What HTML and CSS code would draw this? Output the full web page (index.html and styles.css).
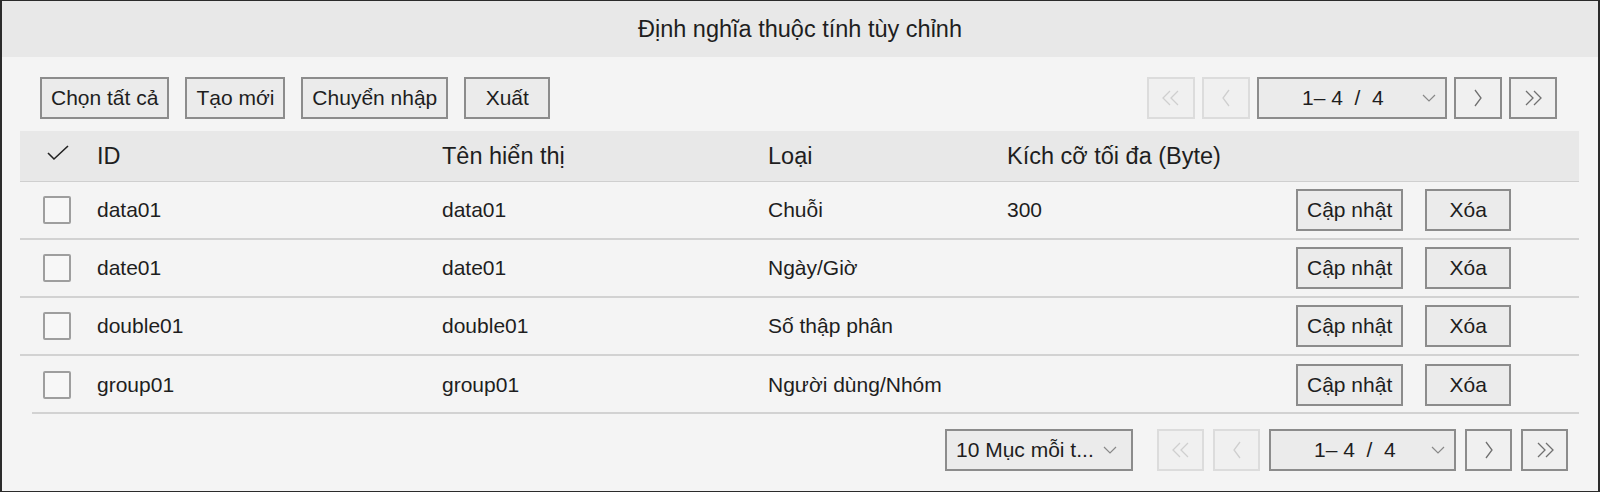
FILE: index.html
```html
<!DOCTYPE html>
<html>
<head>
    <meta charset="utf-8">
    <title>Định nghĩa thuộc tính tùy chỉnh</title>
    <link rel="stylesheet" href="styles.css">
</head>
<body>

<div class="dialog">
    <div class="dialog-title">Định nghĩa thuộc tính tùy chỉnh</div>

    <div class="dialog-body">
        <div class="toolbar">
            <div class="actions">
                <button class="btn">Chọn tất cả</button>
                <button class="btn">Tạo mới</button>
                <button class="btn">Chuyển nhập</button>
                <button class="btn">Xuất</button>
            </div>
            <div class="pager">
                <span class="pg disabled"><svg width="20" height="16" viewBox="0 0 20 16"><polyline points="9,1 2,8 9,15"/><polyline points="17,1 10,8 17,15"/></svg></span>
                <span class="pg disabled"><svg width="10" height="18" viewBox="0 0 10 18"><polyline points="8,1 2,9 8,17"/></svg></span>
                <span class="select page-select">1– 4&nbsp; /&nbsp; 4<svg class="chev" width="14" height="8" viewBox="0 0 14 8"><polyline points="1,1 7,7 13,1"/></svg></span>
                <span class="pg"><svg width="10" height="18" viewBox="0 0 10 18"><polyline points="2,1 8,9 2,17"/></svg></span>
                <span class="pg"><svg width="20" height="16" viewBox="0 0 20 16"><polyline points="3,1 10,8 3,15"/><polyline points="11,1 18,8 11,15"/></svg></span>
            </div>
        </div>

        <table class="grid">
            <colgroup>
                <col style="width: 77px">
                <col style="width: 345px">
                <col style="width: 326px">
                <col style="width: 239px">
                <col style="width: 289px">
                <col>
            </colgroup>
            <thead>
            <tr>
                <th><svg class="checkall" width="22" height="16" viewBox="0 0 22 16"><polyline points="1,8 7,14 21,1"/></svg></th>
                <th>ID</th>
                <th>Tên hiển thị</th>
                <th>Loại</th>
                <th>Kích cỡ tối đa (Byte)</th>
                <th></th>
            </tr>
            </thead>
            <tbody>
            <tr>
                <td><span class="check"></span></td>
                <td>data01</td>
                <td>data01</td>
                <td>Chuỗi</td>
                <td>300</td>
                <td><button class="btn">Cập nhật</button><button class="btn">Xóa</button></td>
            </tr>
            <tr>
                <td><span class="check"></span></td>
                <td>date01</td>
                <td>date01</td>
                <td>Ngày/Giờ</td>
                <td></td>
                <td><button class="btn">Cập nhật</button><button class="btn">Xóa</button></td>
            </tr>
            <tr>
                <td><span class="check"></span></td>
                <td>double01</td>
                <td>double01</td>
                <td>Số thập phân</td>
                <td></td>
                <td><button class="btn">Cập nhật</button><button class="btn">Xóa</button></td>
            </tr>
            <tr class="last">
                <td><span class="check"></span></td>
                <td>group01</td>
                <td>group01</td>
                <td>Người dùng/Nhóm</td>
                <td></td>
                <td><button class="btn">Cập nhật</button><button class="btn">Xóa</button></td>
            </tr>
            </tbody>
        </table>

        <div class="footer">
            <span class="select per-page">10 Mục mỗi t...<svg class="chev" width="14" height="8" viewBox="0 0 14 8"><polyline points="1,1 7,7 13,1"/></svg></span>
            <div class="pager pager-bottom">
                <span class="pg disabled"><svg width="20" height="16" viewBox="0 0 20 16"><polyline points="9,1 2,8 9,15"/><polyline points="17,1 10,8 17,15"/></svg></span>
                <span class="pg disabled"><svg width="10" height="18" viewBox="0 0 10 18"><polyline points="8,1 2,9 8,17"/></svg></span>
                <span class="select page-select">1– 4&nbsp; /&nbsp; 4<svg class="chev" width="14" height="8" viewBox="0 0 14 8"><polyline points="1,1 7,7 13,1"/></svg></span>
                <span class="pg"><svg width="10" height="18" viewBox="0 0 10 18"><polyline points="2,1 8,9 2,17"/></svg></span>
                <span class="pg"><svg width="20" height="16" viewBox="0 0 20 16"><polyline points="3,1 10,8 3,15"/><polyline points="11,1 18,8 11,15"/></svg></span>
            </div>
        </div>
    </div>
</div>

</body>
</html>
```

FILE: styles.css
```css
/* hộp thoại định nghĩa thuộc tính */
body {
    margin: 0;
    background: #fff;
    font-family: "Liberation Sans", Arial, sans-serif;
    font-size: 21px;
    color: #1e1e1e;
}

.dialog {
    width: 1600px;
    height: 492px;
    box-sizing: border-box;
    border: 1px solid #2b2b2b;
    border-left-width: 2px;
    border-right-width: 2px;
    background: #f4f4f4;
}

.dialog-title {
    height: 56px;
    background: #e8e8e8;
    display: flex;
    align-items: center;
    justify-content: center;
    font-size: 23.5px;
}

.dialog-body {
    padding: 20px 19px 0 18px;
}

.toolbar {
    display: flex;
    justify-content: space-between;
    padding: 0 22px 0 20px;
}

.actions {
    display: flex;
    gap: 16px;
}

.btn {
    height: 42px;
    min-width: 86px;
    box-sizing: border-box;
    padding: 0 9px;
    border: 2px solid #8c8c8c;
    background: #ebebeb;
    font: inherit;
    color: #1e1e1e;
}

.pager {
    display: flex;
    gap: 7px;
}

.pg {
    width: 48px;
    height: 42px;
    box-sizing: border-box;
    border: 2px solid #8c8c8c;
    background: #f0f0f0;
    display: flex;
    align-items: center;
    justify-content: center;
}

.pg svg polyline {
    fill: none;
    stroke: #707070;
    stroke-width: 1.3;
}

.pg.disabled {
    border-color: #dcdcdc;
}

.pg.disabled svg polyline {
    stroke: #cfcfcf;
}

.select {
    height: 42px;
    box-sizing: border-box;
    border: 2px solid #8c8c8c;
    background: #ebebeb;
    display: flex;
    align-items: center;
    white-space: nowrap;
}

.select .chev {
    margin-left: auto;
}

.chev polyline {
    fill: none;
    stroke: #888;
    stroke-width: 1.2;
}

.page-select {
    width: 190px;
    padding: 0 9px 0 43px;
}

.per-page {
    width: 188px;
    padding: 0 14px 0 9px;
}

.grid {
    width: 100%;
    margin-top: 12px;
    border-collapse: collapse;
    table-layout: fixed;
}

.grid th {
    height: 50px;
    background: #e8e8e8;
    border-bottom: 1px solid #cfcfcf;
    font-weight: normal;
    font-size: 23.5px;
    text-align: left;
    padding: 0;
}

.grid td {
    height: 56px;
    border-bottom: 2px solid #d2d2d2;
    padding: 0;
    vertical-align: middle;
}

.grid tr.last td {
    height: 58px;
    border-bottom: none;
    background: linear-gradient(#d2d2d2, #d2d2d2) no-repeat;
    background-size: 100% 2px;
    background-position: 0 100%;
}

.grid tr.last td:first-child {
    background-position: 12px 100%;
}

.grid td .btn + .btn {
    margin-left: 22px;
}

.checkall {
    display: block;
    margin-left: 27px;
    margin-top: -6px;
}

.checkall polyline {
    fill: none;
    stroke: #222;
    stroke-width: 1.6;
}

.check {
    display: block;
    width: 28px;
    height: 28px;
    box-sizing: border-box;
    margin-left: 23px;
    border: 2px solid #9e9e9e;
    border-radius: 2px;
    background: #f7f7f7;
}

.footer {
    display: flex;
    justify-content: flex-end;
    gap: 24px;
    padding: 15px 11px 0 0;
}

.pager-bottom {
    gap: 9px;
}

.pager-bottom .pg {
    width: 47px;
}

.pager-bottom .page-select {
    width: 187px;
}
```
